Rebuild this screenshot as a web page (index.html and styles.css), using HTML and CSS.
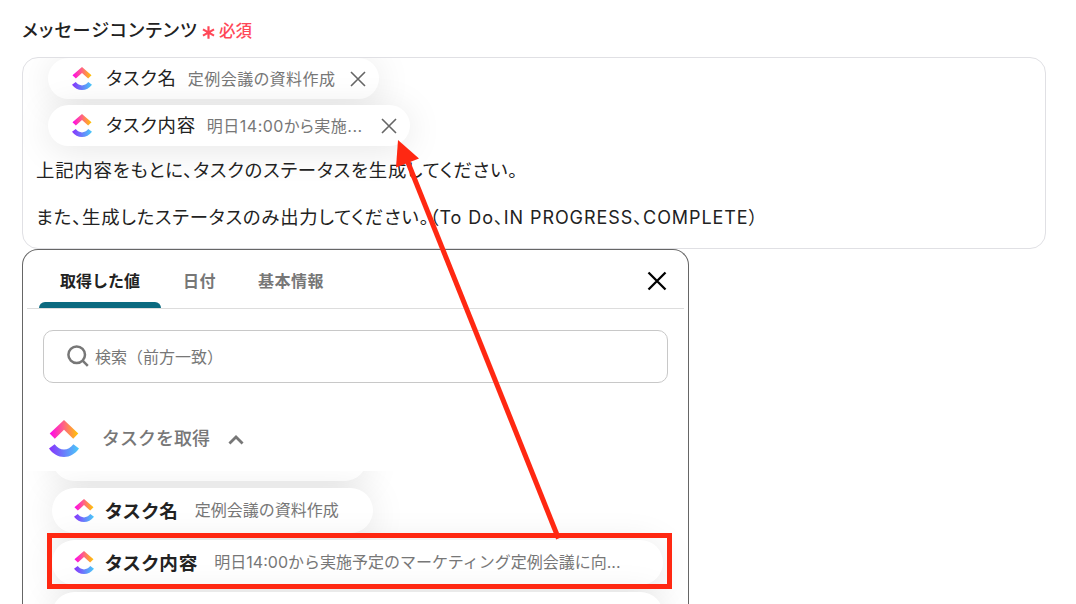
FILE: index.html
```html
<!DOCTYPE html>
<html lang="ja">
<head>
  <meta charset="UTF-8">
  <meta name="viewport" content="width=device-width, initial-scale=1.0">
  <title>メッセージコンテンツ</title>
  <link rel="stylesheet" href="styles.css">
</head>
<body>
  <svg class="defs" width="0" height="0">
    <defs>
      <linearGradient id="warm" x1="0" x2="1" y1="0" y2="0">
        <stop offset="0" stop-color="#ff02f0"/>
        <stop offset="0.5" stop-color="#ff6680"/>
        <stop offset="1" stop-color="#ffc800"/>
      </linearGradient>
      <linearGradient id="cool" x1="0" x2="1" y1="0" y2="0">
        <stop offset="0" stop-color="#8930fd"/>
        <stop offset="1" stop-color="#49ccf9"/>
      </linearGradient>
      <symbol id="logo" viewBox="0 0 30 37" preserveAspectRatio="none">
        <path fill="url(#warm)" d="M0.7 13.4 L15 0 L29.3 13.4 L24.2 18.7 L15 9.8 L5.8 18.7 Z"/>
        <path fill="url(#cool)" d="M0 28.6 L5.6 24.3 C8.4 27.9 11.5 29.6 15 29.6 C18.5 29.6 21.6 27.9 24.4 24.3 L30 28.6 C26 34.2 20.9 37 15 37 C9.1 37 4 34.2 0 28.6 Z"/>
      </symbol>
    </defs>
  </svg>

  <div class="label">
    <span class="label-text">メッセージコンテンツ</span>
    <svg class="asterisk" viewBox="0 0 12 12"><path d="M6 0.3V11.7M0.9 3.1L11.1 8.9M11.1 3.1L0.9 8.9"/></svg>
    <span class="required">必須</span>
  </div>

  <div class="editor">
    <div class="line">
      <span class="chip">
        <svg class="logo"><use href="#logo"/></svg>
        <span class="chip-name">タスク名</span>
        <span class="chip-value">定例会議の資料作成</span>
        <svg class="remove" viewBox="0 0 16 16"><path d="M1 1L15 15M15 1L1 15"/></svg>
      </span>
    </div>
    <div class="line">
      <span class="chip second">
        <svg class="logo"><use href="#logo"/></svg>
        <span class="chip-name">タスク内容</span>
        <span class="chip-value">明日14:00から実施...</span>
        <svg class="remove" viewBox="0 0 16 16"><path d="M1 1L15 15M15 1L1 15"/></svg>
      </span>
    </div>
    <p class="line">上記内容をもとに、タスクのステータスを生成してください。</p>
    <p class="line">また、生成したステータスのみ出力してください。<span class="latin">（To Do、IN PROGRESS、COMPLETE）</span></p>
  </div>

  <div class="panel">
    <div class="tabs">
      <div class="tab active">取得した値</div>
      <div class="tab">日付</div>
      <div class="tab">基本情報</div>
      <svg class="close" viewBox="0 0 20 20"><path d="M1.5 1.5L18.5 18.5M18.5 1.5L1.5 18.5"/></svg>
    </div>

    <div class="search">
      <svg class="search-icon" viewBox="0 0 22 22"><circle cx="9.7" cy="9.7" r="8.3"/><path d="M15.6 15.6L20.8 20.8"/></svg>
      <span class="placeholder">検索（前方一致）</span>
    </div>

    <div class="group">
      <svg class="group-logo"><use href="#logo"/></svg>
      <span class="group-name">タスクを取得</span>
      <svg class="caret" viewBox="0 0 14 9"><path d="M1.1 7.7L7 1.8L12.9 7.7"/></svg>
    </div>

    <div class="list">
      <div class="item short"></div>
      <div class="item short">
        <svg class="logo"><use href="#logo"/></svg>
        <span class="item-name">タスク名</span>
        <span class="item-value">定例会議の資料作成</span>
      </div>
      <div class="item">
        <svg class="logo"><use href="#logo"/></svg>
        <span class="item-name">タスク内容</span>
        <span class="item-value">明日14:00から実施予定のマーケティング定例会議に向...</span>
      </div>
      <div class="item"></div>
    </div>
  </div>

  <div class="highlight"></div>
  <svg class="arrow" viewBox="0 0 1076 604">
    <path class="arrow-line" d="M558.5 538.5L407 160"/>
    <path class="arrow-head" d="M398 140L419 158.5L396 167.5Z"/>
  </svg>
</body>
</html>
```

FILE: styles.css
```css
* {
  box-sizing: border-box;
}
body {
  margin: 0;
  width: 1076px;
  height: 604px;
  padding: 16px 30px 0 22px;
  overflow: hidden;
  position: relative;
  background: #fff;
  color: #222;
  font-family: Inter, "Noto Sans CJK JP", sans-serif;
  font-size: 16px;
  white-space: nowrap;
}
svg {
  flex: none;
  fill: none;
}
.defs {
  position: absolute;
}

.label {
  display: flex;
  align-items: center;
  height: 29px;
  margin-bottom: 12px;
}
.label-text {
  width: 180px;
  padding-bottom: 3px;
  font-size: 18px;
  font-weight: 500;
  font-feature-settings: "palt";
  letter-spacing: 1.2px;
}
.asterisk {
  width: 13px;
  height: 13px;
  margin: 3px 4px 0 0;
  stroke: #ff4757;
  stroke-width: 2;
}
.required {
  padding-bottom: 2px;
  color: #ff4757;
  font-size: 16.5px;
  font-weight: 500;
}

.editor {
  width: 1024px;
  height: 192px;
  padding: 0 14px;
  overflow: hidden;
  border: 1px solid #e0e0e4;
  border-radius: 16px;
}
.line {
  display: flex;
  align-items: center;
  height: 46.5px;
  margin: 0;
  padding-bottom: 3px;
  font-size: 18.4px;
  letter-spacing: 0.78px;
  font-feature-settings: "palt";
}
p.line {
  margin-left: -1px;
}
.latin {
  font-size: 18px;
  letter-spacing: 0.92px;
}
.editor .line:first-child {
  height: 43px;
  padding-bottom: 2px;
}
.editor .line:nth-child(2) {
  padding: 3px 0 0;
}
.chip {
  display: flex;
  align-items: center;
  width: 331px;
  height: 41px;
  margin-left: 11px;
  padding: 0 13px 0 24px;
  background: #fff;
  border-radius: 21px;
  box-shadow: 0 4px 36px rgba(0, 0, 0, 0.1);
}
.chip.second {
  width: 362px;
}
.logo {
  width: 20px;
  height: 23px;
}
.chip-name {
  margin: 0 11px 0 14px;
  padding-bottom: 3px;
}
.chip-value {
  padding-bottom: 1px;
  color: #777;
  font-size: 16px;
  letter-spacing: 0.5px;
}
.remove {
  width: 16px;
  height: 16px;
  margin-left: auto;
  stroke: #666;
  stroke-width: 1.6;
}

.panel {
  width: 667px;
  height: 355px;
  border: 1px solid #666;
  border-bottom: 0;
  border-radius: 16px 16px 0 0;
}
.tabs {
  display: flex;
  height: 59px;
  margin: 0 4px;
  padding: 0 17px 0 12px;
  border-bottom: 1px solid #ddd;
}
.tab {
  display: flex;
  align-items: center;
  padding: 2px 21px 0;
  color: #777;
  font-weight: 700;
  letter-spacing: 0.5px;
}
.tab.active {
  position: relative;
  width: 122px;
  margin-right: 1px;
  color: #222;
  letter-spacing: 0;
}
.tab.active::after {
  content: "";
  position: absolute;
  left: 0;
  bottom: 0;
  width: 122px;
  height: 6px;
  background: #0b6a80;
  border-radius: 6px 6px 0 0;
}
.close {
  width: 20px;
  height: 20px;
  margin: 21px 0 0 auto;
  stroke: #000;
  stroke-width: 2.3;
}

.search {
  display: flex;
  align-items: center;
  height: 53px;
  margin: 21px 20px 0;
  padding: 0 23px;
  color: #777;
  border: 1px solid #c8c8c8;
  border-radius: 10px;
}
.search-icon {
  width: 22px;
  height: 22px;
  margin: 0 6px 2px 0;
  stroke: #777;
  stroke-width: 2.5;
}
.placeholder {
  padding-bottom: 2px;
}

.group {
  display: flex;
  align-items: center;
  height: 38px;
  margin: 36px 0 0 26px;
  color: #777;
}
.group-logo {
  width: 30px;
  height: 37px;
}
.group-name {
  margin: 0 18px 0 23px;
  padding-bottom: 2px;
  font-size: 18px;
  font-weight: 500;
}
.caret {
  width: 16px;
  height: 10px;
  margin-top: 3px;
  stroke: #777;
  stroke-width: 2.5;
}

.list {
  height: 133px;
  margin: 14px 1px 0 0;
  padding-left: 29px;
  overflow: hidden;
}
.item {
  display: flex;
  align-items: center;
  width: 611px;
  height: 45px;
  margin-bottom: 7px;
  padding: 0 22px 1px;
  background: #fff;
  border-radius: 23px;
  box-shadow: 0 4px 36px rgba(0, 0, 0, 0.1);
}
.item.short {
  width: 321px;
}
.item:first-child {
  width: 315px;
  margin-top: -35px;
}
.item-name {
  margin: 0 16px 0 11px;
  padding-bottom: 2px;
  font-size: 18.6px;
  font-weight: 700;
  font-feature-settings: "palt";
  letter-spacing: 1px;
}
.item-value {
  padding-bottom: 2px;
  color: #777;
}

.highlight {
  position: absolute;
  left: 47px;
  top: 533px;
  width: 625px;
  height: 56px;
  border: 5px solid #ff2812;
}
.arrow {
  position: absolute;
  left: 0;
  top: 0;
  width: 1076px;
  height: 604px;
}
.arrow-line {
  stroke: #ff2812;
  stroke-width: 5;
}
.arrow-head {
  fill: #ff2812;
}
```
